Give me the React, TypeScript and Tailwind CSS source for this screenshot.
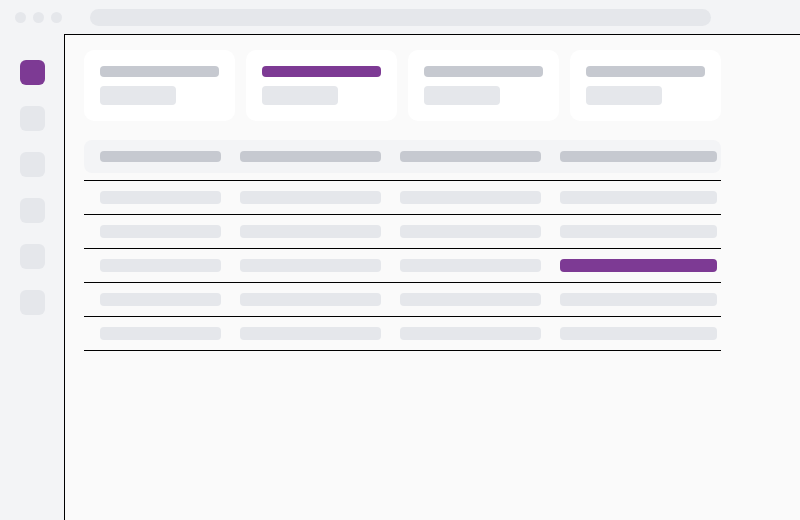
const PURPLE = "bg-[#7d3a94]";

const rows = [0, 1, 2, 3, 4];
const colWidths = ["w-[121px]", "w-[141px]", "w-[141px]", "w-[157px]"];

function StatCard({ active }: { active?: boolean }) {
  return (
    <div className="flex h-[71px] w-[151px] flex-col rounded-[10px] bg-white px-4 pt-4">
      <div className={`h-[11px] w-[119px] rounded ${active ? PURPLE : "bg-[#c6c9d0]"}`} />
      <div className="mt-[9px] h-[19px] w-[76px] rounded bg-[#e5e7eb]" />
    </div>
  );
}

export default function App() {
  return (
    <div className="flex h-[520px] w-[800px] flex-col overflow-hidden bg-[#f3f4f6]">
      {/* browser chrome */}
      <div className="flex h-[34px] shrink-0 items-center pl-[15px]">
        <div className="flex gap-[7px]">
          <span className="h-[11px] w-[11px] rounded-full bg-[#e5e7eb]" />
          <span className="h-[11px] w-[11px] rounded-full bg-[#e5e7eb]" />
          <span className="h-[11px] w-[11px] rounded-full bg-[#e5e7eb]" />
        </div>
        <div className="ml-[28px] h-[17px] w-[621px] rounded-full bg-[#e5e7eb]" />
      </div>

      <div className="flex min-h-0 flex-1">
        {/* sidebar */}
        <nav className="flex w-[64px] shrink-0 flex-col items-center gap-[21px] pt-[26px]">
          <div className={`h-[25px] w-[25px] rounded-md ${PURPLE}`} />
          {[0, 1, 2, 3, 4].map((i) => (
            <div key={i} className="h-[25px] w-[25px] rounded-md bg-[#e5e7eb]" />
          ))}
        </nav>

        {/* main */}
        <main className="flex-1 border-l border-t border-black bg-[#fafafa] pl-[19px] pt-[15px]">
          <div className="flex gap-[11px]">
            <StatCard />
            <StatCard active />
            <StatCard />
            <StatCard />
          </div>

          <div className="mt-[19px] w-[637px]">
            <div className="flex h-[33px] items-center gap-[19px] rounded-lg bg-[#f3f4f6] pl-4">
              {colWidths.map((w, i) => (
                <div key={i} className={`h-[11px] ${w} rounded bg-[#c6c9d0]`} />
              ))}
            </div>
            <div className="mt-[7px] border-t border-black">
              {rows.map((r) => (
                <div key={r} className="flex h-[34px] items-center gap-[19px] border-b border-black pl-4">
                  {colWidths.map((w, i) => (
                    <div
                      key={i}
                      className={`h-[13px] ${w} rounded ${r === 2 && i === 3 ? PURPLE : "bg-[#e5e7eb]"}`}
                    />
                  ))}
                </div>
              ))}
            </div>
          </div>
        </main>
      </div>
    </div>
  );
}
